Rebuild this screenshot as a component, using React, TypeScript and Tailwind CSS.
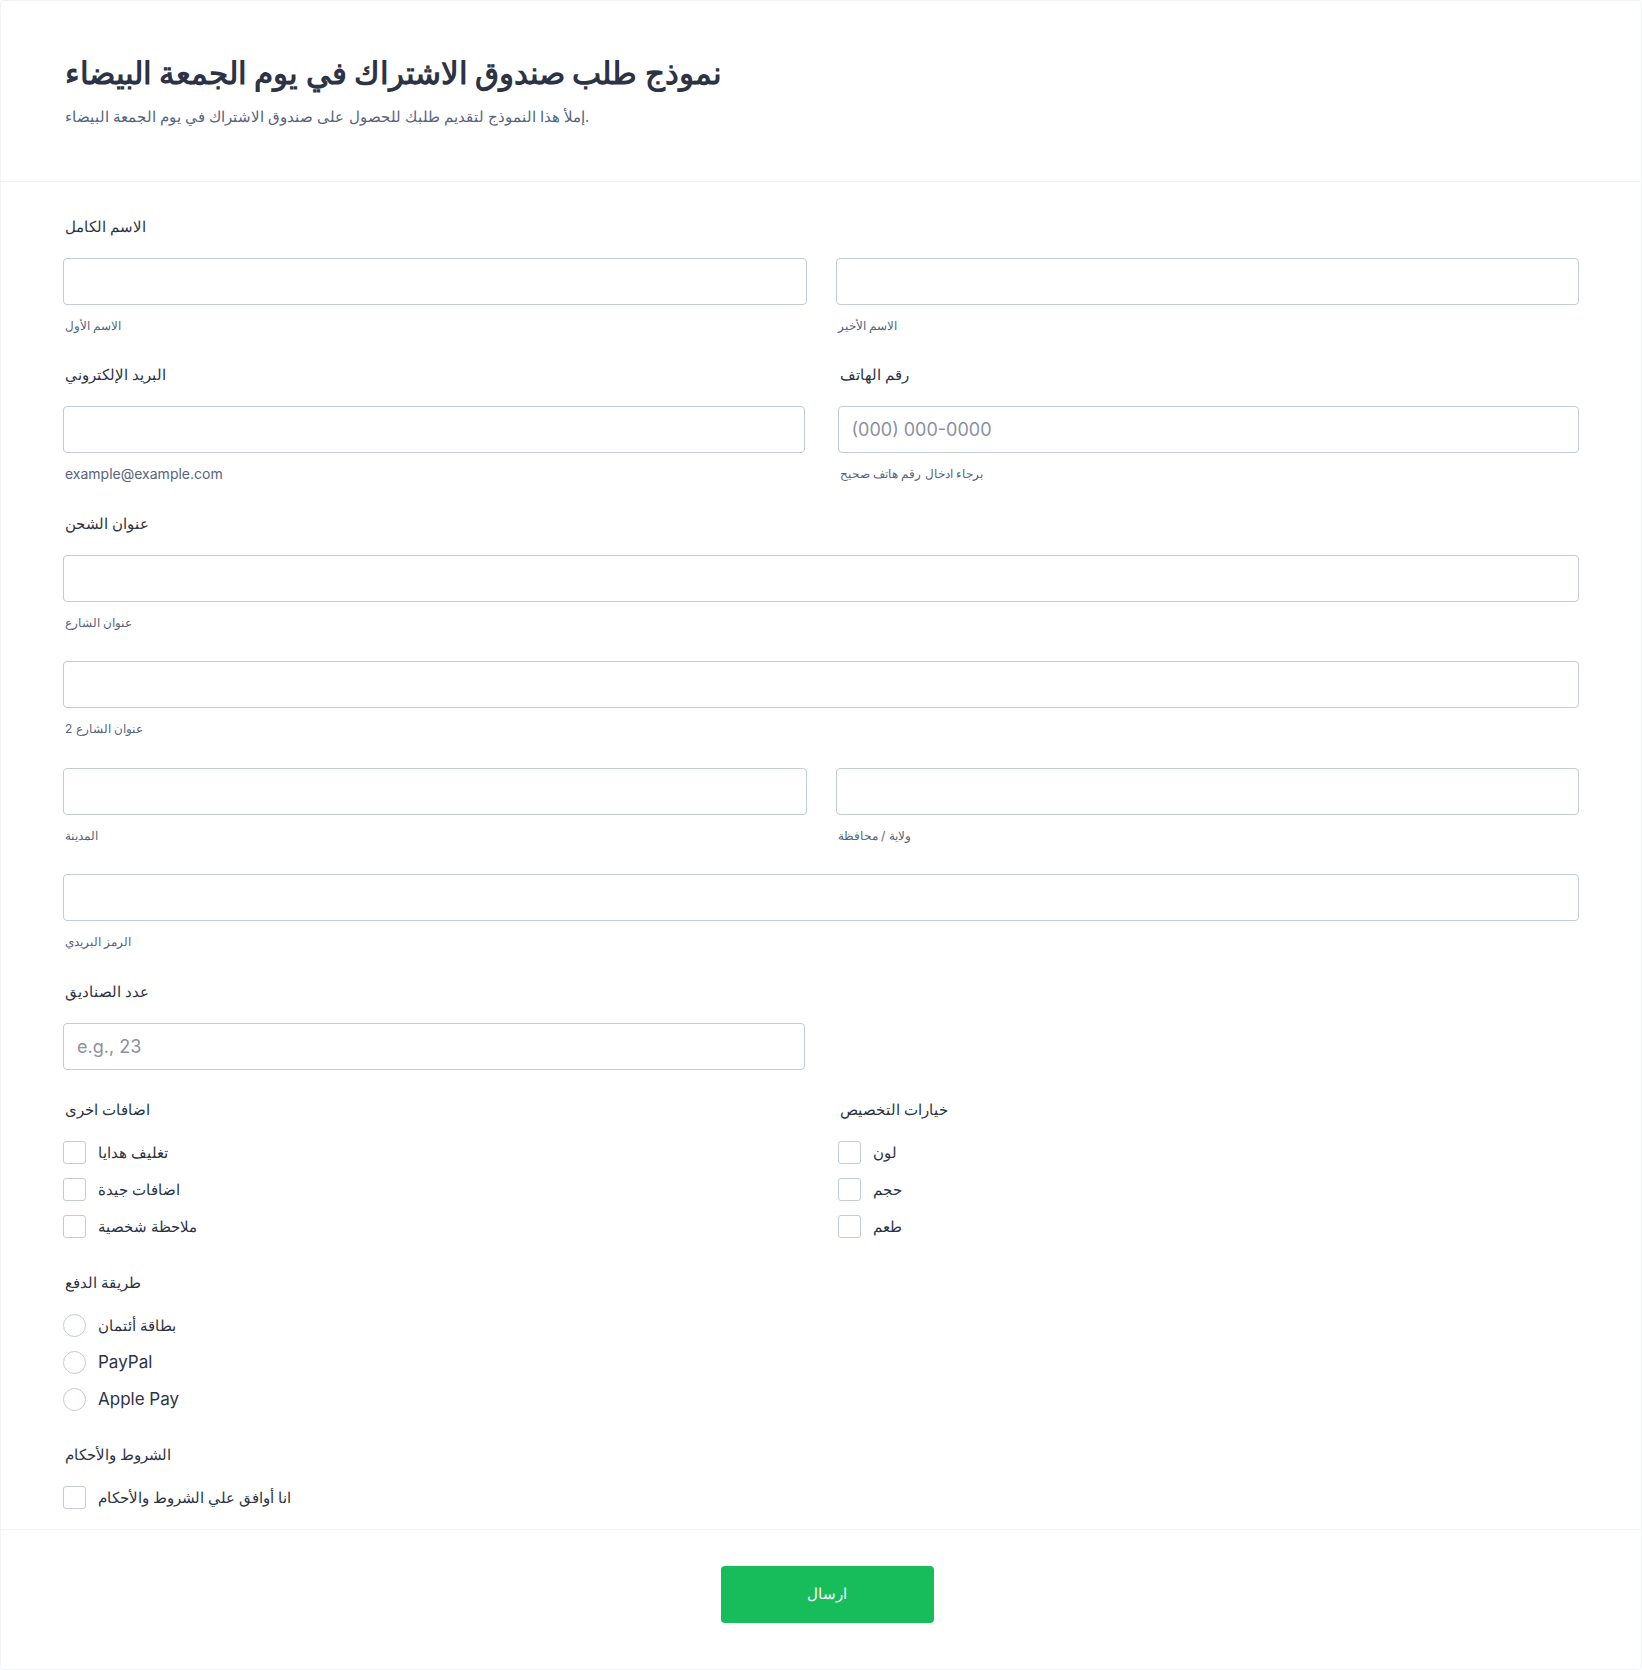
import React from "react";

const Label = ({ children }: { children: React.ReactNode }) => (
  <div className="text-[15px] leading-[24px] text-[#2c3345] pl-[2px] mb-[19px]">{children}</div>
);

const Sub = ({ children }: { children: React.ReactNode }) => (
  <div className="mt-[12px] text-[12px] leading-[18px] text-[#57647e] pl-[2px]">{children}</div>
);

const Input = ({ placeholder }: { placeholder?: string }) => (
  <input
    placeholder={placeholder}
    className="block w-full h-[47px] rounded-[4px] border border-[#c3cad8] bg-white px-[13px] text-[18px] text-[#2c3345] placeholder:text-[#8a91a0] outline-none"
  />
);

const Check = ({ label }: { label: string }) => (
  <label className="flex items-center h-[23px] gap-[12px]">
    <span className="block w-[23px] h-[23px] rounded-[3px] border border-[#c3cad8] bg-white shrink-0" />
    <span className="text-[14.5px] leading-[23px] text-[#2c3345]">{label}</span>
  </label>
);

const Radio = ({ label, latin }: { label: string; latin?: boolean }) => (
  <label className="flex items-center h-[23px] gap-[12px]">
    <span className="block w-[23px] h-[23px] rounded-full border border-[#c3cad8] bg-white shrink-0" />
    <span className={latin ? "text-[17px] leading-[23px] text-[#2c3345]" : "text-[14.5px] leading-[23px] text-[#2c3345]"}>{label}</span>
  </label>
);

export default function App() {
  return (
    <div className="min-h-[1670px] bg-white font-['Inter',sans-serif]">
      <div className="border border-[#f1f3f8] rounded-[4px] min-h-[1670px]">
        {/* Header */}
        <div className="px-[62px] pt-[52px] pb-[52px] border-b border-[#f1f3f8]">
          <h1 className="text-[30.5px] leading-[40px] font-bold text-[#2c3345] pl-[2px]">
            نموذج طلب صندوق الاشتراك في يوم الجمعة البيضاء
          </h1>
          <p className="mt-[12px] text-[14.5px] leading-[24px] text-[#57647e] pl-[2px]">
            إملأ هذا النموذج لتقديم طلبك للحصول على صندوق الاشتراك في يوم الجمعة البيضاء.
          </p>
        </div>

        {/* Body */}
        <div className="px-[62px] pt-[33px] pb-[20px] border-b border-[#f1f3f8]">
          <Label>الاسم الكامل</Label>
          <div className="grid grid-cols-2 gap-x-[29px]">
            <div>
              <Input />
              <Sub>الاسم الأول</Sub>
            </div>
            <div>
              <Input />
              <Sub>الاسم الأخير</Sub>
            </div>
          </div>

          <div className="grid grid-cols-2 gap-x-[33px] mt-[28px]">
            <div>
              <Label>البريد الإلكتروني</Label>
              <Input />
              <div className="mt-[12px] text-[14px] leading-[18px] text-[#57647e] pl-[2px]">example@example.com</div>
            </div>
            <div>
              <Label>رقم الهاتف</Label>
              <Input placeholder="(000) 000-0000" />
              <Sub>برجاء ادخال رقم هاتف صحيح</Sub>
            </div>
          </div>

          <div className="mt-[29px]">
            <Label>عنوان الشحن</Label>
            <Input />
            <Sub>عنوان الشارع</Sub>
            <div className="mt-[29px]">
              <Input />
              <Sub>عنوان الشارع 2</Sub>
            </div>
            <div className="grid grid-cols-2 gap-x-[29px] mt-[30px]">
              <div>
                <Input />
                <Sub>المدينة</Sub>
              </div>
              <div>
                <Input />
                <Sub>ولاية / محافظة</Sub>
              </div>
            </div>
            <div className="mt-[29px]">
              <Input />
              <Sub>الرمز البريدي</Sub>
            </div>
          </div>

          <div className="grid grid-cols-2 gap-x-[33px] mt-[29px]">
            <div>
              <Label>عدد الصناديق</Label>
              <Input placeholder="e.g., 23" />
            </div>
          </div>

          <div className="grid grid-cols-2 gap-x-[33px] mt-[28px]">
            <div>
              <Label>اضافات اخرى</Label>
              <div className="flex flex-col gap-[14px]">
                <Check label="تغليف هدايا" />
                <Check label="اضافات جيدة" />
                <Check label="ملاحظة شخصية" />
              </div>
            </div>
            <div>
              <Label>خيارات التخصيص</Label>
              <div className="flex flex-col gap-[14px]">
                <Check label="لون" />
                <Check label="حجم" />
                <Check label="طعم" />
              </div>
            </div>
          </div>

          <div className="mt-[33px]">
            <Label>طريقة الدفع</Label>
            <div className="flex flex-col gap-[14px]">
              <Radio label="بطاقة أئتمان" />
              <Radio label="PayPal" latin />
              <Radio label="Apple Pay" latin />
            </div>
          </div>

          <div className="mt-[32px]">
            <Label>الشروط والأحكام</Label>
            <Check label="انا أوافق علي الشروط والأحكام" />
          </div>
        </div>

        <div className="flex justify-center pt-[36px] pb-[46px] pl-[12px]">
          <button className="w-[213px] h-[57px] rounded-[4px] bg-[#18bd5b] text-white text-[15px]">
            ارسال
          </button>
        </div>
      </div>
    </div>
  );
}
